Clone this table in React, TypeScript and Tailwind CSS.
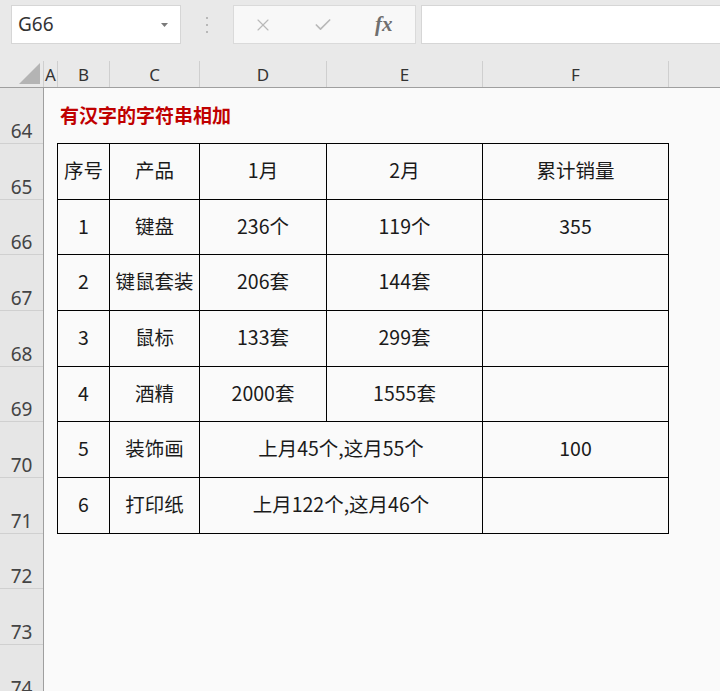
import * as React from 'react'
import { X, Check } from 'lucide-react'

const COLS = [
  { key: 'A', w: 'w-[14px]' },
  { key: 'B', w: 'w-[52px]' },
  { key: 'C', w: 'w-[90px]' },
  { key: 'D', w: 'w-[127px]' },
  { key: 'E', w: 'w-[156px]' },
  { key: 'F', w: 'w-[186px]' },
]

// row heights include the bottom border
const ROW_HEADERS: { n: number; h: string }[] = [
  { n: 64, h: 'h-[56px]' },
  { n: 65, h: 'h-[56px]' },
  { n: 66, h: 'h-[55px]' },
  { n: 67, h: 'h-[56px]' },
  { n: 68, h: 'h-[56px]' },
  { n: 69, h: 'h-[55px]' },
  { n: 70, h: 'h-[56px]' },
  { n: 71, h: 'h-[56px]' },
  { n: 72, h: 'h-[55px]' },
  { n: 73, h: 'h-[56px]' },
  { n: 74, h: 'h-[56px]' },
]

type Cell = { text: string; w: string }

const ROWS: { h: string; cells: Cell[] }[] = [
  {
    h: 'h-[56px]',
    cells: [
      { text: '序号', w: 'w-[52px]' },
      { text: '产品', w: 'w-[90px]' },
      { text: '1月', w: 'w-[127px]' },
      { text: '2月', w: 'w-[156px]' },
      { text: '累计销量', w: 'w-[186px]' },
    ],
  },
  {
    h: 'h-[55px]',
    cells: [
      { text: '1', w: 'w-[52px]' },
      { text: '键盘', w: 'w-[90px]' },
      { text: '236个', w: 'w-[127px]' },
      { text: '119个', w: 'w-[156px]' },
      { text: '355', w: 'w-[186px]' },
    ],
  },
  {
    h: 'h-[56px]',
    cells: [
      { text: '2', w: 'w-[52px]' },
      { text: '键鼠套装', w: 'w-[90px]' },
      { text: '206套', w: 'w-[127px]' },
      { text: '144套', w: 'w-[156px]' },
      { text: '', w: 'w-[186px]' },
    ],
  },
  {
    h: 'h-[56px]',
    cells: [
      { text: '3', w: 'w-[52px]' },
      { text: '鼠标', w: 'w-[90px]' },
      { text: '133套', w: 'w-[127px]' },
      { text: '299套', w: 'w-[156px]' },
      { text: '', w: 'w-[186px]' },
    ],
  },
  {
    h: 'h-[55px]',
    cells: [
      { text: '4', w: 'w-[52px]' },
      { text: '酒精', w: 'w-[90px]' },
      { text: '2000套', w: 'w-[127px]' },
      { text: '1555套', w: 'w-[156px]' },
      { text: '', w: 'w-[186px]' },
    ],
  },
  {
    h: 'h-[56px]',
    cells: [
      { text: '5', w: 'w-[52px]' },
      { text: '装饰画', w: 'w-[90px]' },
      { text: '上月45个,这月55个', w: 'w-[283px]' },
      { text: '100', w: 'w-[186px]' },
    ],
  },
  {
    h: 'h-[56px]',
    cells: [
      { text: '6', w: 'w-[52px]' },
      { text: '打印纸', w: 'w-[90px]' },
      { text: '上月122个,这月46个', w: 'w-[283px]' },
      { text: '', w: 'w-[186px]' },
    ],
  },
]

const cjk = "font-['Noto_Sans_CJK_SC','Noto_Sans',sans-serif]"

export default function App() {
  return (
    <div className="flex h-[691px] w-[720px] flex-col overflow-hidden bg-[#fafafa]">
      {/* Formula bar + column headers */}
      <div className="bg-[#e9e9e9]">
        <div className="flex h-[50px] items-start pl-[11px] pt-[5px]">
          {/* Name box */}
          <div className="flex h-[39px] w-[170px] items-center justify-between border border-[#d6d6d6] bg-white pl-[6px] pr-[12px]">
            <span className="font-['Noto_Sans',sans-serif] text-[19px] text-[#333]">G66</span>
            <svg width="7" height="4" viewBox="0 0 7 4">
              <polygon points="0,0 7,0 3.5,4" fill="#7a7a7a" />
            </svg>
          </div>
          {/* Separator dots */}
          <div className="flex h-[39px] w-[52px] flex-col items-center justify-center gap-[5px]">
            <span className="h-[2px] w-[2px] bg-[#b8b8b8]" />
            <span className="h-[2px] w-[2px] bg-[#b8b8b8]" />
            <span className="h-[2px] w-[2px] bg-[#b8b8b8]" />
          </div>
          {/* Cancel / Enter / fx */}
          <div className="flex h-[39px] w-[183px] items-center border border-[#dadada] bg-[#f8f8f8] pl-[19px]">
            <X className="h-[20px] w-[20px] text-[#b9b9b9]" strokeWidth={1.4} />
            <Check className="ml-[40px] h-[20px] w-[20px] text-[#b9b9b9]" strokeWidth={2} />
            <span className="ml-[42px] font-['Liberation_Serif',serif] text-[21px] font-bold italic text-[#6f6f6f]">fx</span>
          </div>
          {/* Formula input */}
          <div className="ml-[5px] h-[39px] flex-1 border border-r-0 border-[#d6d6d6] bg-white" />
        </div>
        <div className="h-[11px]" />
        <div className="flex h-[27px] border-b border-[#9f9f9f] font-['Noto_Sans',sans-serif] text-[17px] text-[#333]">
          <div className="relative w-[44px] border-r border-[#cfcfcf]">
            <svg className="absolute bottom-[3px] right-[3px]" width="21" height="21" viewBox="0 0 21 21">
              <polygon points="21,0 21,21 0,21" fill="#b4b4b4" />
            </svg>
          </div>
          {COLS.map((c) => (
            <div
              key={c.key}
              className={`${c.w} flex shrink-0 items-center justify-center border-r border-[#cfcfcf] leading-none`}
            >
              {c.key}
            </div>
          ))}
          <div className="flex-1" />
        </div>
      </div>

      {/* Sheet body */}
      <div className="flex flex-1">
        {/* Row headers */}
        <div className="w-[44px] shrink-0 border-r border-[#9f9f9f] bg-[#e6e6e6]">
          {ROW_HEADERS.map((r) => (
            <div
              key={r.n}
              className={`${r.h} flex items-end justify-center border-b border-[#d0d0d0] font-['Noto_Sans',sans-serif] text-[19px] leading-[24px] text-[#444]`}
            >
              {r.n}
            </div>
          ))}
        </div>

        {/* Cells */}
        <div className={`flex-1 pl-[13px] ${cjk}`}>
          <div className="flex h-[55px] items-center pl-[3px] text-[19px] font-bold text-[#c00000]">
            有汉字的字符串相加
          </div>
          <div className="w-[612px] border-l border-t border-black text-[19.5px] text-[#1a1a1a]">
            {ROWS.map((row, i) => (
              <div key={i} className={`flex ${row.h}`}>
                {row.cells.map((c, j) => (
                  <div
                    key={j}
                    className={`${c.w} flex shrink-0 items-center justify-center whitespace-nowrap border-b border-r border-black pb-[3px]`}
                  >
                    {c.text}
                  </div>
                ))}
              </div>
            ))}
          </div>
        </div>
      </div>
    </div>
  )
}
